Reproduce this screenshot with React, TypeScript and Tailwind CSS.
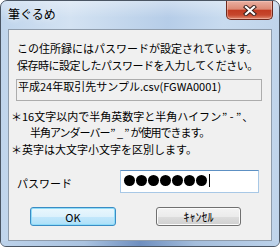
const jp = "font-['Noto_Sans_CJK_JP','Noto_Sans_CJK_SC',sans-serif]";

function CloseGlyph() {
  return (
    <svg width="14" height="11" viewBox="0 0 14 11">
      <path d="M3 2 L11 9 M11 2 L3 9" stroke="#3a2320" strokeWidth="4.2" strokeLinecap="square" />
      <path d="M3 2 L11 9 M11 2 L3 9" stroke="#ffffff" strokeWidth="2.2" strokeLinecap="square" />
    </svg>
  );
}

function Q({ children }: { children: React.ReactNode }) {
  return <span className="inline-block w-[7px] text-center tracking-normal">{children}</span>;
}

export default function App() {
  return (
    <div className={`w-[280px] h-[247px] flex flex-col border border-[#4a5563] rounded-t-[7px] rounded-b-[6px] overflow-hidden bg-[linear-gradient(90deg,#c0d5ec_0%,#d3e2f2_25%,#c2d6ec_45%,#b6cde8_60%,#c8dbef_80%,#c0d4ea_100%)] ${jp}`}>
      {/* title bar */}
      <div className="h-[28px] flex items-start shrink-0 bg-[linear-gradient(180deg,rgba(255,255,255,0.35)_0%,rgba(255,255,255,0)_60%)]">
        <div className="pl-[7px] pt-[6px] text-[12px] leading-[14px] text-black [text-shadow:0_0_6px_rgba(255,255,255,0.9)]">
          筆ぐるめ
        </div>
        <div className="ml-auto mr-[6px] w-[47px] h-[19px] flex items-center justify-center border border-t-0 border-[#6e2a1e] rounded-b-[5px] bg-[linear-gradient(180deg,#e9b0a2_0%,#dc8a75_45%,#c23b21_52%,#c6472d_78%,#e08a70_100%)] shadow-[inset_0_0_0_1px_rgba(255,210,200,0.45)]">
          <CloseGlyph />
        </div>
      </div>

      {/* client area */}
      <div className="ml-[7px] w-[264px] h-[212px] shrink-0 border border-[#8f9cab] bg-[#f0f0f0] flex flex-col text-black text-[11px]">
        <div className="pt-[10px] pl-[8px] leading-[17px] whitespace-nowrap">
          <div>この住所録にはパスワードが設定されています。</div>
          <div className="tracking-[-0.5px]">保存時に設定したパスワードを入力してください。</div>
        </div>

        <div className="mt-[5px] ml-[7px] w-[246px] h-[22px] border border-[#acacac] pl-[1px] leading-[13px] whitespace-nowrap">
          平成24年取引先サンプル.csv(FGWA0001)
        </div>

        <div className="mt-[7px] ml-[2px] whitespace-nowrap">
          <div className="leading-[16px]">
            ＊16文字以内で半角英数字と半角ハイフン<Q>”</Q><Q>-</Q><Q>”</Q>、
          </div>
          <div className="leading-[17px] pl-[19px] tracking-[-1px]">
            半角アンダーバー<Q>”</Q><Q>_</Q><Q>”</Q>が使用できます。
          </div>
          <div className="leading-[16px]">＊英字は大文字小文字を区別します。</div>
        </div>

        <div className="mt-[13px] flex items-center h-[23px]">
          <div className="pl-[8px] w-[111px] pt-[3px] leading-[14px]">パスワード</div>
          <div className="w-[139px] h-[23px] bg-white border border-[#a8c8e6] border-t-[#5d90c3] flex items-center pl-[3px] gap-[1px] pb-[2px]">
            {Array.from({ length: 7 }).map((_, i) => (
              <span key={i} className="w-[11px] h-[11px] rounded-full bg-black" />
            ))}
            <span className="w-[1px] h-[13px] bg-black ml-[1px]" />
          </div>
        </div>

        <div className="mt-[14px] flex pl-[21px] gap-[40px]">
          <button className="w-[86px] h-[19px] rounded-[3px] border border-[#3a8cc4] bg-[linear-gradient(180deg,#eaf7fd_0%,#dcf1fc_50%,#c3e7fb_52%,#ade0f8_100%)] shadow-[inset_0_0_0_1px_#8fdcf8] leading-[16px] text-[11px] text-black">
            OK
          </button>
          <button className="w-[85px] h-[19px] rounded-[3px] border border-[#707070] bg-[linear-gradient(180deg,#f3f3f3_0%,#ebebeb_50%,#dddddd_52%,#cfcfcf_100%)] shadow-[inset_0_0_0_1px_#fbfbfb] leading-[16px] text-[12px] text-black">
            ｷｬﾝｾﾙ
          </button>
        </div>
      </div>

      {/* bottom frame */}
      <div className="flex-1 bg-[linear-gradient(90deg,#bcd2ea_0%,#aac3e0_30%,#6f8fbf_50%,#a5bedc_70%,#bcd2ea_100%)]" />
    </div>
  );
}
